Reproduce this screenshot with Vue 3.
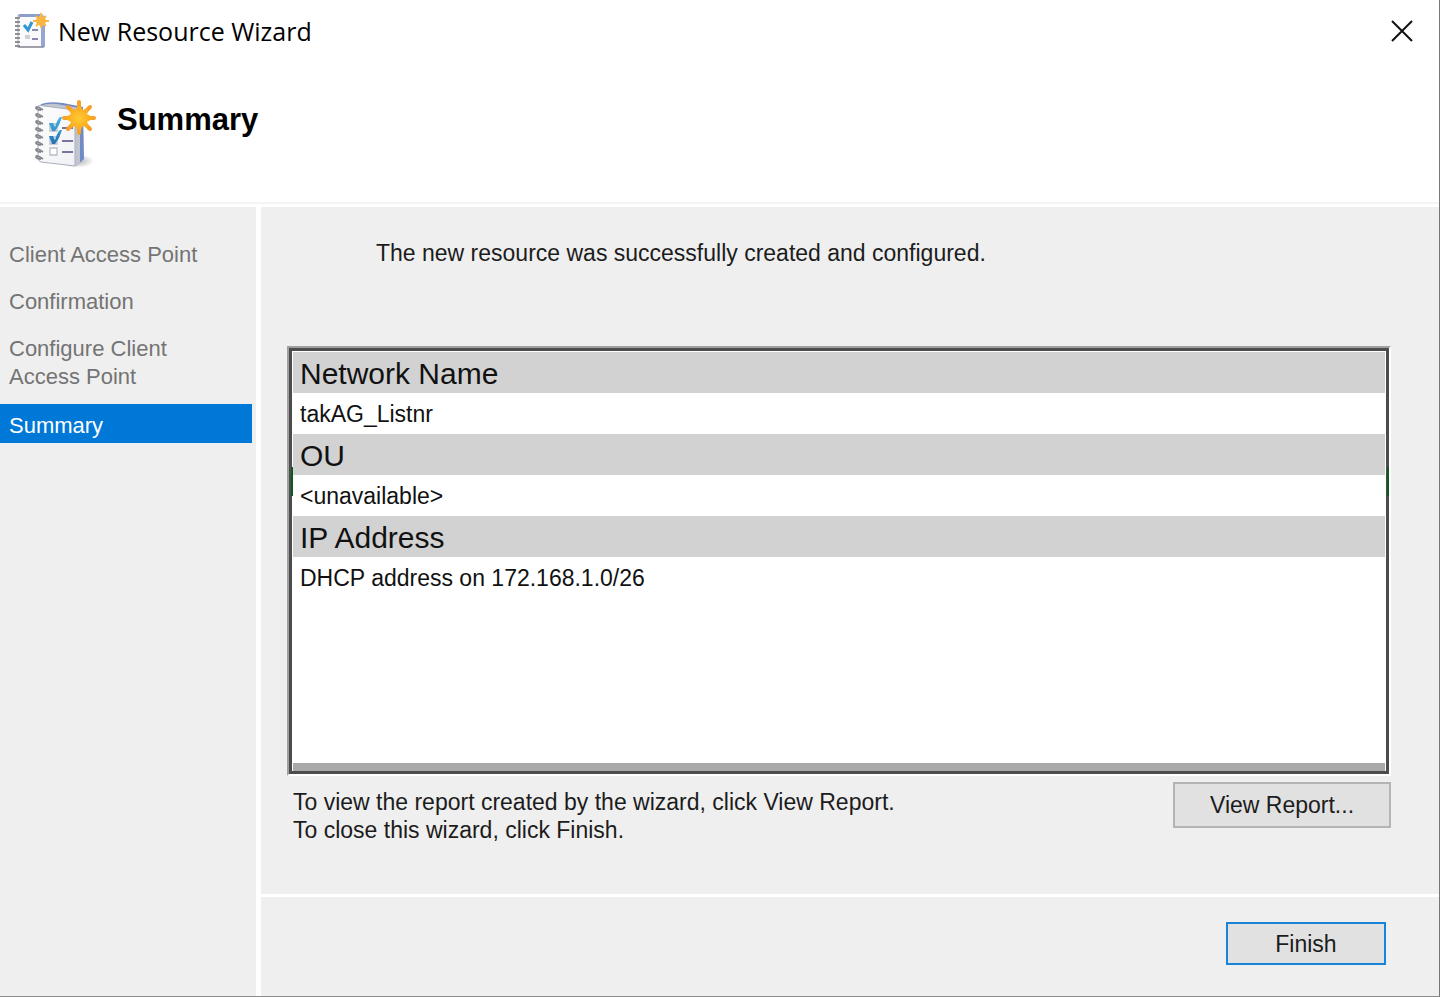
<script setup>
import { ref } from 'vue'

const steps = ['Client Access Point', 'Confirmation', 'Configure Client Access Point', 'Summary']
const current = ref(3)

const report = [
  { label: 'Network Name', value: 'takAG_Listnr' },
  { label: 'OU', value: '<unavailable>' },
  { label: 'IP Address', value: 'DHCP address on 172.168.1.0/26' },
]
const coils = [9, 16, 23, 30, 37, 44, 51, 58]
const smallCoils = [5, 9, 13, 17, 21, 25, 29, 33]
</script>

<template>
  <div class="window">
    <header class="titlebar">
      <svg class="app-icon" viewBox="0 0 36 36" aria-hidden="true">
        <path d="M5 2h25v32H5z" fill="#fafafc" stroke="#a4a8b4" />
        <path d="M6 1h22v3H6z" fill="#8c9ecd" />
        <path d="M28 3h4v31h-4z" fill="#97a5d2" />
        <path d="M5 34h26" stroke="#8c8c96" stroke-width="1.4" />
        <path v-for="y in smallCoils" :key="y" :d="`M2 ${y}h5`" stroke="#85858a" stroke-width="1.800" />
        <path d="M11 12l4 5 4-8" fill="none" stroke="#2e97d4" stroke-width="3" />
        <path d="M19 17h6M19 26h6" stroke="#8b88ae" stroke-width="1.800" />
        <path d="M12 22h5v4h-5z" fill="#cfcfd2" />
        <path d="M28 0v15M20 8h16M23 3l10 10M33 3L23 13" stroke="#f6b84f" stroke-width="2" />
        <circle cx="28" cy="8" r="5" fill="#f9b640" />
      </svg>
      <span class="title">New Resource Wizard</span>
      <button class="close" type="button" aria-label="Close">
        <svg viewBox="0 0 22 22" aria-hidden="true">
          <path d="M1 1l20 20M21 1L1 21" stroke="#111" stroke-width="2" />
        </svg>
      </button>
    </header>

    <div class="banner">
      <svg class="banner-icon" viewBox="0 0 64 72" aria-hidden="true">
        <defs>
          <linearGradient id="page" x1="0" y1="0" x2="1" y2="1">
            <stop offset="0" stop-color="#fdfdfe" />
            <stop offset="1" stop-color="#f0f1f5" />
          </linearGradient>
          <linearGradient id="tick" x1="0" y1="0" x2="0" y2="1">
            <stop offset="0" stop-color="#45b3e6" />
            <stop offset="1" stop-color="#2272b4" />
          </linearGradient>
          <radialGradient id="star">
            <stop offset="0" stop-color="#ffcb30" />
            <stop offset="1" stop-color="#f9a11c" />
          </radialGradient>
          <radialGradient id="shade">
            <stop offset="0" stop-color="#777" stop-opacity=".6" />
            <stop offset="1" stop-color="#777" stop-opacity="0" />
          </radialGradient>
        </defs>
        <ellipse cx="44" cy="63" rx="17" ry="7" fill="url(#shade)" />
        <path d="M7 7q6-4 23-2l20 4 1 52-8 7-6-3z" fill="#7189c6" />
        <path d="M7 8q10-4 22-1l18 3v56l-4 2-5-2z" fill="#c0c5d0" />
        <path d="M5 8q3-1 6 0l31 4v56L8 64q-3-1-3-4z" fill="url(#page)" stroke="#a9afba" />
        <g fill="none" stroke="#85888e" stroke-width="1.800">
          <path v-for="y in coils" :key="y" :d="`M10 ${y + 3}q-7-5-7-2 1 2 5 2`" />
        </g>
        <g fill="#fff" stroke="#b9bdc4" stroke-width="1.300">
          <path d="M17 26h7v7h-7zM17 39h7v7h-7zM17 50h7v7h-7z" />
        </g>
        <path d="M29 30h11M29 43h11M29 54h11" stroke="#77759e" stroke-width="1.800" />
        <path d="M16 25l4 0 2 4q2-7 5-10h2l-3 8-4 6h-3zM16 38l4 0 2 4q2-7 5-10h2l-3 8-4 6h-3z" fill="url(#tick)" />
        <g stroke="#f6a02a" stroke-width="4" stroke-linecap="round">
          <path d="M46 4v31M31 20h30M35 9l22 22M57 9L35 31" />
        </g>
        <path d="M46 6l4 6 7-3-3 7 7 4-7 4 3 7-7-3-4 7-4-7-7 3 3-7-7-4 7-4-3-7 7 3z" fill="url(#star)" />
      </svg>
      <h1>Summary</h1>
    </div>

    <div class="body">
      <nav class="steps" aria-label="Wizard steps">
        <ol>
          <li
            v-for="(step, i) in steps"
            :key="step"
            :class="{ active: i === current }"
            :aria-current="i === current ? 'step' : undefined"
          >{{ step }}</li>
        </ol>
      </nav>

      <main class="content">
        <section class="page">
          <p class="message">The new resource was successfully created and configured.</p>
          <div class="report">
            <dl>
              <template v-for="row in report" :key="row.label">
                <dt>{{ row.label }}</dt>
                <dd>{{ row.value }}</dd>
              </template>
            </dl>
            <div class="report-end"></div>
          </div>
          <div class="hint">
            <p>
              To view the report created by the wizard, click View Report.<br />
              To close this wizard, click Finish.
            </p>
            <button class="btn view" type="button">View Report...</button>
          </div>
        </section>
        <footer class="actions">
          <button class="btn finish" type="button">Finish</button>
        </footer>
      </main>
    </div>
  </div>
</template>

<style>
body {
  margin: 0;
}
</style>

<style scoped>
* {
  box-sizing: border-box;
}
.window {
  display: flex;
  flex-direction: column;
  min-height: 100vh;
  background: #fff;
  border-right: 1px solid #777;
  border-bottom: 1px solid #8c8c8c;
  color: #1c1c1c;
  font: 23px/28px "Liberation Sans", Arial, sans-serif;
}
h1,
p,
ol,
dl,
dd {
  margin: 0;
  padding: 0;
}
button {
  font: inherit;
  color: inherit;
  padding: 0;
}
.titlebar {
  display: flex;
  align-items: center;
  height: 62px;
  padding: 0 26px 0 13px;
}
.app-icon {
  width: 36px;
  height: 36px;
  margin-right: 9px;
}
.title {
  flex: 1;
  color: #000;
  font: 25px/32px "Open Sans", "Noto Sans", sans-serif;
}
.close {
  display: flex;
  border: 0;
  background: none;
}
.close svg {
  width: 22px;
  height: 22px;
}
.banner {
  display: flex;
  align-items: flex-start;
  gap: 20px;
  height: 142px;
  padding: 36px 33px 0;
  border-bottom: 2px solid #f4f4f4;
}
.banner-icon {
  width: 64px;
  height: 72px;
}
h1 {
  color: #000;
  font-size: 31px;
  line-height: 44px;
}
.body {
  display: flex;
  flex: 1;
  margin-top: 3px;
  background: #efefef;
}
.steps {
  flex: none;
  width: 261px;
  padding: 28px 4px 0 0;
  border-right: 5px solid #fff;
  color: #747474;
  font-size: 22px;
}
ol {
  display: flex;
  flex-direction: column;
  gap: 8px;
  list-style: none;
}
li {
  padding: 6px 40px 5px 9px;
}
li.active {
  padding-top: 8px;
  padding-bottom: 3px;
  background: #0078d7;
  color: #fff;
}
.content {
  display: flex;
  flex: 1;
  flex-direction: column;
}
.page {
  display: flex;
  flex: 1;
  flex-direction: column;
  padding: 32px 48px 0 26px;
}
.message {
  margin-bottom: 79px;
  padding-left: 89px;
}
.report {
  position: relative;
  display: flex;
  flex: 1;
  flex-direction: column;
  border: 2px solid;
  border-color: #a0a0a0 #fff #fff #a0a0a0;
  background: #fff;
  box-shadow: inset 0 0 0 3px #4c4c4c;
  padding: 4px 4px 3px 4px;
}
.report::before,
.report::after {
  content: "";
  position: absolute;
  top: 119px;
  left: 2px;
  width: 2px;
  height: 29px;
  background: #0b5a22;
}
.report::after {
  right: 0;
  left: auto;
}
dl {
  flex: 1;
  color: #111;
}
dt,
dd {
  height: 41px;
  padding-left: 7px;
  line-height: 43px;
}
dt {
  background: #d2d2d2;
  font-size: 30px;
}
.report-end {
  height: 8px;
  background: #a9a9a9;
}
.hint {
  display: flex;
  justify-content: space-between;
  align-items: flex-start;
  height: 118px;
  padding: 6px 0 0 6px;
}
.hint p {
  padding-top: 6px;
}
.btn {
  border: 2px solid #b4b4b4;
  background: #e1e1e1;
}
.view {
  width: 218px;
  height: 46px;
}
.actions {
  display: flex;
  justify-content: flex-end;
  padding: 25px 53px 31px;
  border-top: 3px solid #fff;
}
.finish {
  width: 160px;
  height: 43px;
  border-color: #1883d7;
}
</style>
